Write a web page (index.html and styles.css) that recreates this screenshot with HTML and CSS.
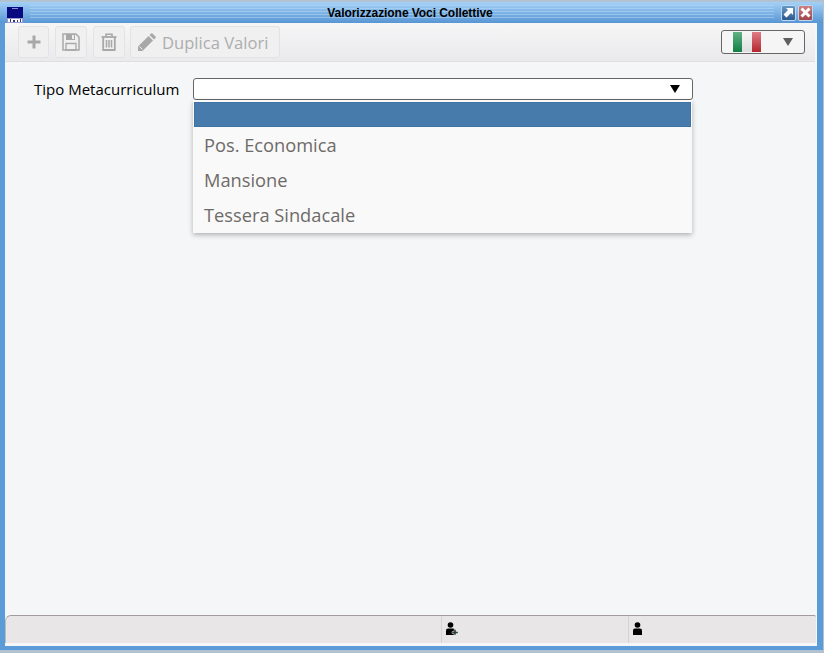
FILE: index.html
```html
<!DOCTYPE html>
<html lang="it">

<head>
    <meta charset="UTF-8">
    <title>Valorizzazione Voci Collettive</title>
    <link rel="stylesheet" href="styles.css">
</head>

<body>

    <div class="window">
        <div class="titlebar">
            <svg class="app-logo" width="16" height="16" viewBox="0 0 16 16">
                <rect width="16" height="16" fill="#0a0a80" />
                <rect x="5" y="1" width="6" height="1" fill="#8f8fd0" />
                <rect y="11" width="16" height="5" fill="#9a9bd0" />
                <rect x="1" y="12" width="14" height="3" fill="#fff" />
                <rect x="3" y="12" width="1" height="3" fill="#33337f" />
                <rect x="6" y="13" width="2" height="2" fill="#33337f" />
                <rect x="10" y="13" width="1" height="2" fill="#33337f" />
                <rect x="13" y="12" width="1" height="3" fill="#33337f" />
            </svg>
            <div class="title-stripes">
                <span class="title-text">Valorizzazione Voci Collettive</span>
            </div>
            <div class="win-btn win-btn-max">
                <svg width="11" height="11" viewBox="0 0 11 11">
                    <path d="M3 1h7v7L8 6 3.500 10.500 0.500 7.500 5 3z" fill="#fff" />
                </svg>
            </div>
            <div class="win-btn win-btn-close">
                <svg width="11" height="11" viewBox="0 0 11 11">
                    <path d="M1.500 1.500l8 8M9.500 1.500l-8 8" stroke="#fff" stroke-width="3" />
                </svg>
            </div>
        </div>

        <div class="toolbar">
            <div class="tool-btn btn-add">
                <svg width="14" height="14" viewBox="0 0 14 14">
                    <path d="M5.500 0.500h3v5h5v3h-5v5h-3v-5h-5v-3h5z" fill="#a8a8a8" />
                </svg>
            </div>
            <div class="tool-btn btn-save">
                <svg width="18" height="18" viewBox="0 0 18 18">
                    <path d="M1 1h13l3 3v13H1z" fill="none" stroke="#a8a8a8" stroke-width="1.500" />
                    <path d="M4 1h9v6H4z" fill="#a8a8a8" />
                    <path d="M10 2h2v4h-2z" fill="#eee" />
                    <path d="M4 10.500h10V17H4z" fill="none" stroke="#a8a8a8" stroke-width="1.300" />
                </svg>
            </div>
            <div class="tool-btn btn-del">
                <svg width="16" height="18" viewBox="0 0 16 18">
                    <path d="M0.500 4h15" stroke="#a8a8a8" stroke-width="1.800" />
                    <path d="M5 4V1.200h6V4" fill="none" stroke="#a8a8a8" stroke-width="1.600" />
                    <path d="M2.200 4.500V17h11.600V4.500" fill="none" stroke="#a8a8a8" stroke-width="1.800" />
                    <path d="M5.500 7v7.500M8 7v7.500M10.500 7v7.500" stroke="#a8a8a8" stroke-width="1.500" />
                </svg>
            </div>
            <div class="tool-btn btn-dup">
                <svg width="19" height="19" viewBox="0 0 19 19">
                    <path d="M1 13.500L11.500 3l4.500 4.500L5.500 18H1z" fill="#a8a8a8" />
                    <path d="M2.500 13.500l3 3" stroke="#f0f0f1" stroke-width="1" />
                    <path d="M12.500 2l1.500-1.500q.8-.6 1.500 0l3 3q.6.8 0 1.500L17 6.500z" fill="#a8a8a8" />
                </svg>
                <span>Duplica Valori</span>
            </div>
            <div class="lang-select">
                <div class="flag">
                    <span class="flag-green"></span>
                    <span class="flag-white"></span>
                    <span class="flag-red"></span>
                </div>
                <span class="arrow arrow-grey"></span>
            </div>
        </div>

        <div class="content">
            <div class="form-row">
                <label class="form-label">Tipo Metacurriculum</label>
                <div class="select">
                    <span class="arrow"></span>
                    <div class="dropdown">
                        <div class="option selected"></div>
                        <div class="option">Pos. Economica</div>
                        <div class="option">Mansione</div>
                        <div class="option">Tessera Sindacale</div>
                    </div>
                </div>
            </div>
        </div>

        <div class="statusbar">
            <div class="status-cell status-main"></div>
            <div class="status-cell status-mid">
                <svg width="12" height="13" viewBox="0 0 12 13">
                    <circle cx="4.500" cy="3" r="2.800" fill="#000" />
                    <path d="M0 13V8.500Q0 6.500 2 6.500h5Q9 6.500 9 8.500V13z" fill="#000" />
                    <path d="M8 7.500h2v2h2v2h-2v1.500H8v-1.500H6v-2h2z" fill="#2b3a3a" stroke="#e8e6e6" stroke-width=".5" />
                </svg>
            </div>
            <div class="status-cell status-last">
                <svg width="9" height="13" viewBox="0 0 9 13">
                    <circle cx="4.500" cy="3" r="2.800" fill="#000" />
                    <path d="M0 13V8.500Q0 6.500 2 6.500h5Q9 6.500 9 8.500V13z" fill="#000" />
                </svg>
            </div>
        </div>
    </div>

</body>

</html>
```

FILE: styles.css
```css
* {
    box-sizing: border-box;
}

html,
body {
    margin: 0;
    height: 100%;
    overflow: hidden;
}

body {
    font-family: "Open Sans", sans-serif;
    background: #b3c2d1;
}

.window {
    display: flex;
    flex-direction: column;
    width: 823px;
    height: 648px;
    margin-top: 2px;
    border-left: 5px solid #5b9bd8;
    border-right: 6px solid #5b9bd8;
    border-bottom: 4px solid #5b9bd8;
    background: #f5f6f8;
}

.titlebar {
    display: flex;
    align-items: center;
    height: 21px;
    margin: 0 -6px 0 -5px;
    padding: 0 10px 0 7px;
    background: linear-gradient(#a3d0f6, #5896d4);
}

.app-logo {
    flex: none;
    margin-top: 5px;
}

.title-stripes {
    flex: 1;
    display: flex;
    justify-content: center;
    align-items: center;
    height: 15px;
    margin: 0 5px 0 7px;
    padding-left: 16px;
    background: repeating-linear-gradient(rgba(190, 222, 248, 0.45) 0, rgba(190, 222, 248, 0.45) 1px, transparent 1px, transparent 3px);
}

.title-text {
    font-family: "Liberation Sans", sans-serif;
    font-size: 12px;
    font-weight: bold;
    letter-spacing: -0.06px;
    color: #000;
}

.win-btn {
    display: flex;
    align-items: center;
    justify-content: center;
    width: 15px;
    height: 16px;
    margin-left: 2px;
    border: 1px solid #bcd8f0;
    border-radius: 2px;
}

.win-btn-max {
    background: linear-gradient(#6a97c4, #2c5a8c);
}

.win-btn-close {
    background: linear-gradient(#cf7f80, #a04648);
}

.toolbar {
    display: flex;
    align-items: center;
    gap: 6px;
    height: 39px;
    margin-right: 2px;
    padding: 0 10px 0 13px;
    border-bottom: 1px solid #dfdfe1;
    background: linear-gradient(#f6f6f7, #eaeaec);
}

.tool-btn {
    display: flex;
    align-items: center;
    justify-content: center;
    height: 32px;
    border: 1px solid #e3e3e5;
    border-radius: 3px;
    background: #f0f0f1;
}

.btn-add {
    width: 31px;
}

.btn-save {
    width: 32px;
}

.btn-del {
    width: 32px;
}

.btn-dup {
    justify-content: flex-start;
    gap: 6px;
    width: 150px;
    margin-left: -1px;
    padding-left: 6px;
    font-size: 16.6px;
    color: #adadad;
}

.lang-select {
    display: flex;
    align-items: center;
    justify-content: space-between;
    width: 84px;
    height: 24px;
    margin-left: auto;
    padding: 0 11px;
    border: 1px solid #666;
    border-radius: 3px;
    background: #f5f5f6;
}

.flag {
    display: flex;
    width: 28px;
    height: 20px;
}

.flag span {
    flex: 1;
}

.flag-green {
    background: linear-gradient(#62b184, #0f7f45);
}

.flag-white {
    background: linear-gradient(#f6f6f6, #dedede);
}

.flag-red {
    background: linear-gradient(#e07c85, #b3262f);
}

.arrow {
    width: 0;
    height: 0;
    border-left: 5.500px solid transparent;
    border-right: 5.500px solid transparent;
    border-top: 8px solid #000;
}

.arrow-grey {
    border-top-color: #5f5f63;
}

.content {
    flex: 1;
    padding: 16px 0 0 29px;
}

.form-row {
    display: flex;
    align-items: center;
    height: 22px;
}

.form-label {
    width: 159px;
    font-size: 15px;
    color: #000;
}

.select {
    position: relative;
    display: flex;
    align-items: center;
    justify-content: flex-end;
    width: 500px;
    height: 22px;
    padding-right: 12px;
    border: 1px solid #666;
    border-radius: 3px;
    background: #fff;
}

.dropdown {
    position: absolute;
    top: 21px;
    left: -1px;
    width: 499px;
    height: 133px;
    padding: 2px 1px 0;
    background: #f9f9f9;
    box-shadow: 0 2px 5px rgba(0, 0, 0, 0.28);
}

.option {
    height: 35px;
    padding-left: 10px;
    font-size: 18.25px;
    line-height: 35px;
    color: #6e6a68;
}

.option.selected {
    height: 25px;
    border: 1px solid #3f73a3;
    background: #467bac;
}

.statusbar {
    display: flex;
    height: 28px;
    margin: 0 1px 3px 0;
    border-top: 1px solid #a39c9c;
    border-left: 1px solid #bdbaba;
    border-radius: 6px 2px 0 0;
    background: #e8e6e6;
}

.status-cell {
    display: flex;
    align-items: flex-start;
    padding: 6px 0 0 4px;
}

.status-main {
    width: 435px;
}

.status-mid {
    width: 187px;
    border-left: 1px solid #d5d3d3;
}

.status-last {
    flex: 1;
    border-left: 1px solid #d5d3d3;
}
```
